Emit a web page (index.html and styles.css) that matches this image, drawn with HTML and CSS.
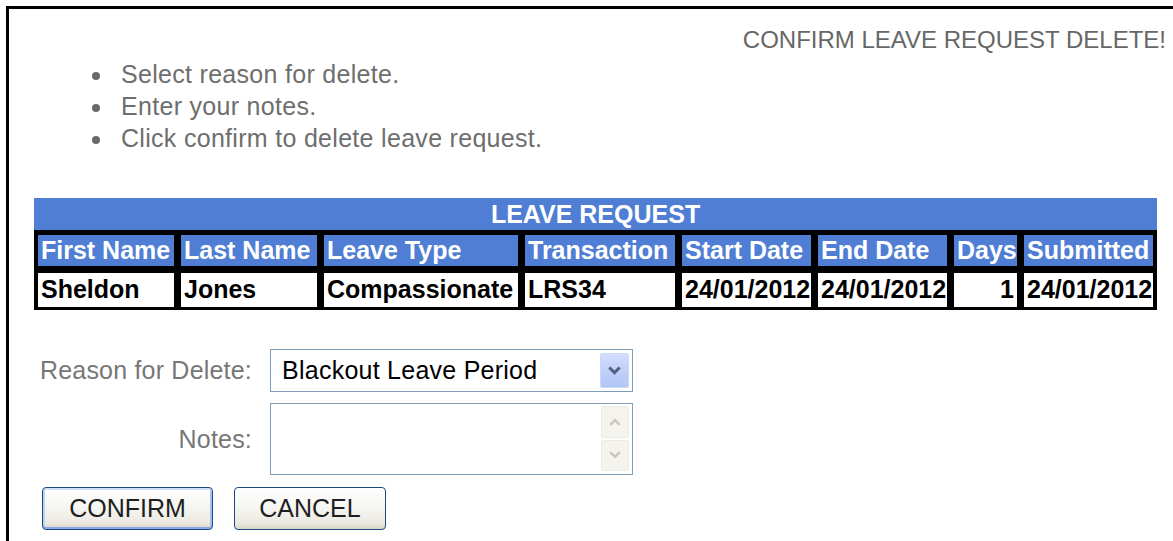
FILE: index.html
```html
<!DOCTYPE html>
<html lang="en">
<head>
<meta charset="utf-8">
<title>Confirm Leave Request Delete</title>
<link rel="stylesheet" href="styles.css">
</head>
<body>
<div class="panel">
  <div class="heading">CONFIRM LEAVE REQUEST DELETE!</div>
  <ul class="steps">
    <li>Select reason for delete.</li>
    <li>Enter your notes.</li>
    <li>Click confirm to delete leave request.</li>
  </ul>

  <table class="leave">
    <colgroup>
      <col class="w-first">
      <col class="w-last">
      <col class="w-type">
      <col class="w-trans">
      <col class="w-start">
      <col class="w-end">
      <col class="w-days">
      <col class="w-sub">
    </colgroup>
    <thead>
      <tr><th colspan="8" class="caption">LEAVE REQUEST</th></tr>
      <tr class="cols">
        <th>First Name</th>
        <th>Last Name</th>
        <th>Leave Type</th>
        <th>Transaction</th>
        <th>Start Date</th>
        <th>End Date</th>
        <th>Days</th>
        <th>Submitted</th>
      </tr>
    </thead>
    <tbody>
      <tr>
        <td>Sheldon</td>
        <td>Jones</td>
        <td>Compassionate</td>
        <td>LRS34</td>
        <td>24/01/2012</td>
        <td>24/01/2012</td>
        <td class="num">1</td>
        <td>24/01/2012</td>
      </tr>
    </tbody>
  </table>

  <div class="form">
    <label class="lbl">Reason for Delete:</label>
    <div class="select">
      <span>Blackout Leave Period</span>
      <span class="drop">
        <svg width="13" height="9" viewBox="0 0 13 9"><path d="M1.3 1.5 L6.5 6.6 L11.7 1.5" fill="none" stroke="#4d6185" stroke-width="3"/></svg>
      </span>
    </div>
    <label class="lbl">Notes:</label>
    <div class="notes">
      <div class="scroll">
        <span class="sbtn"><svg width="12" height="8" viewBox="0 0 12 8"><path d="M1.2 6.8 L6 2.2 L10.8 6.8" fill="none" stroke="#c9c7bc" stroke-width="2.4"/></svg></span>
        <span class="sbtn"><svg width="12" height="8" viewBox="0 0 12 8"><path d="M1.2 1.2 L6 5.8 L10.8 1.2" fill="none" stroke="#c9c7bc" stroke-width="2.4"/></svg></span>
      </div>
    </div>
  </div>

  <div class="actions">
    <button class="btn btn-confirm" type="button">CONFIRM</button>
    <button class="btn btn-cancel" type="button">CANCEL</button>
  </div>
</div>
</body>
</html>
```

FILE: styles.css
```css
html, body {
  margin: 0;
  background: #fff;
  overflow: hidden;
}

body {
  font-family: "Liberation Sans", Arial, sans-serif;
}

.panel {
  box-sizing: border-box;
  height: calc(100vh - 6px);
  margin: 6px 0 0 6px;
  border-top: 3px solid #000;
  border-left: 3px solid #000;
  padding: 0 7px 0 0;
}

.heading {
  margin-top: 17px;
  text-align: right;
  font-size: 24px;
  line-height: 28px;
  color: #676767;
}

/* instruction list */
.steps {
  list-style: none;
  margin: 4px 0 0;
  padding: 0 0 0 83px;
  font-size: 25px;
  line-height: 32px;
  letter-spacing: 0.3px;
  color: #6e6e6e;
}

.steps li {
  display: flex;
  align-items: center;
  gap: 21px;
}

.steps li::before {
  content: "";
  flex: none;
  width: 8px;
  height: 8px;
  margin-top: 3px;
  border-radius: 50%;
  background: #6a6a6a;
}

/* leave request table */
.leave {
  border-collapse: separate;
  border-spacing: 0;
  table-layout: fixed;
  width: 1123px;
  margin: 44px 0 0 25px;
  font-size: 25px;
  font-weight: bold;
  white-space: nowrap;
}

.w-first { width: 140px; }
.w-last  { width: 143px; }
.w-type  { width: 201px; }
.w-trans { width: 157px; }
.w-start { width: 136px; }
.w-end   { width: 136px; }
.w-days  { width: 70px; }
.w-sub   { width: 140px; }

.caption {
  background: #4f7ed4;
  color: #fff;
  height: 32px;
  line-height: 32px;
  padding: 0;
  text-align: center;
}

.cols th,
.leave tbody td {
  border-left: 7px solid #000;
  padding: 0 3px;
  text-align: left;
  overflow: hidden;
}

.cols th:first-child,
.leave tbody td:first-child {
  border-left-width: 4px;
}

.cols th:last-child,
.leave tbody td:last-child {
  border-right: 4px solid #000;
}

.cols th {
  background: #4f7ed4;
  color: #fff;
  border-top: 5px solid #000;
  line-height: 31px;
}

.leave tbody td {
  background: #fff;
  color: #000;
  border-top: 7px solid #000;
  border-bottom: 3px solid #000;
  line-height: 30px;
  padding-top: 1px;
  padding-bottom: 3px;
}

.leave tbody td.num {
  text-align: right;
}

/* delete form */
.form {
  display: grid;
  grid-template-columns: 243px 363px;
  column-gap: 18px;
  row-gap: 11px;
  align-items: center;
  margin-top: 39px;
}

.lbl {
  text-align: right;
  font-size: 25px;
  letter-spacing: 0.2px;
  color: #777;
}

.select {
  box-sizing: border-box;
  height: 43px;
  border: 1px solid #7f9db9;
  display: flex;
  align-items: center;
  justify-content: space-between;
  padding: 0 3px 0 11px;
  font-size: 25px;
  letter-spacing: 0.25px;
  color: #000;
}

.drop {
  box-sizing: border-box;
  width: 29px;
  height: 35px;
  border: 1px solid #cbd8fa;
  border-radius: 2px;
  background: linear-gradient(#d3defd, #bccdf8 60%, #b2c6f5);
  display: flex;
  align-items: center;
  justify-content: center;
}

.notes {
  box-sizing: border-box;
  height: 72px;
  border: 1px solid #7f9db9;
  display: flex;
  justify-content: flex-end;
  padding: 2px 3px 3px 0;
}

.scroll {
  display: flex;
  flex-direction: column;
  gap: 2px;
}

.sbtn {
  box-sizing: border-box;
  width: 28px;
  flex: 1;
  border: 1px solid #ecebe3;
  border-radius: 2px;
  background: #f4f3ee;
  display: flex;
  align-items: center;
  justify-content: center;
}

/* action buttons */
.actions {
  display: flex;
  gap: 21px;
  margin: 12px 0 0 33px;
}

.btn {
  height: 43px;
  padding: 0;
  border: 1px solid #1c4a7e;
  border-radius: 4px;
  background: linear-gradient(#ffffff 0%, #f6f6f2 45%, #ebe9e1 85%, #d9d4c6 100%);
  font-family: "Liberation Sans", Arial, sans-serif;
  font-size: 25px;
  color: #1e1e1e;
}

.btn-confirm {
  width: 171px;
  box-shadow: inset 0 2px 0 #cfe0fb, inset 0 -2px 0 #8aa9e9, inset 2px 0 0 #bcd2f6, inset -2px 0 0 #a6bff1;
}

.btn-cancel {
  width: 152px;
}
```
